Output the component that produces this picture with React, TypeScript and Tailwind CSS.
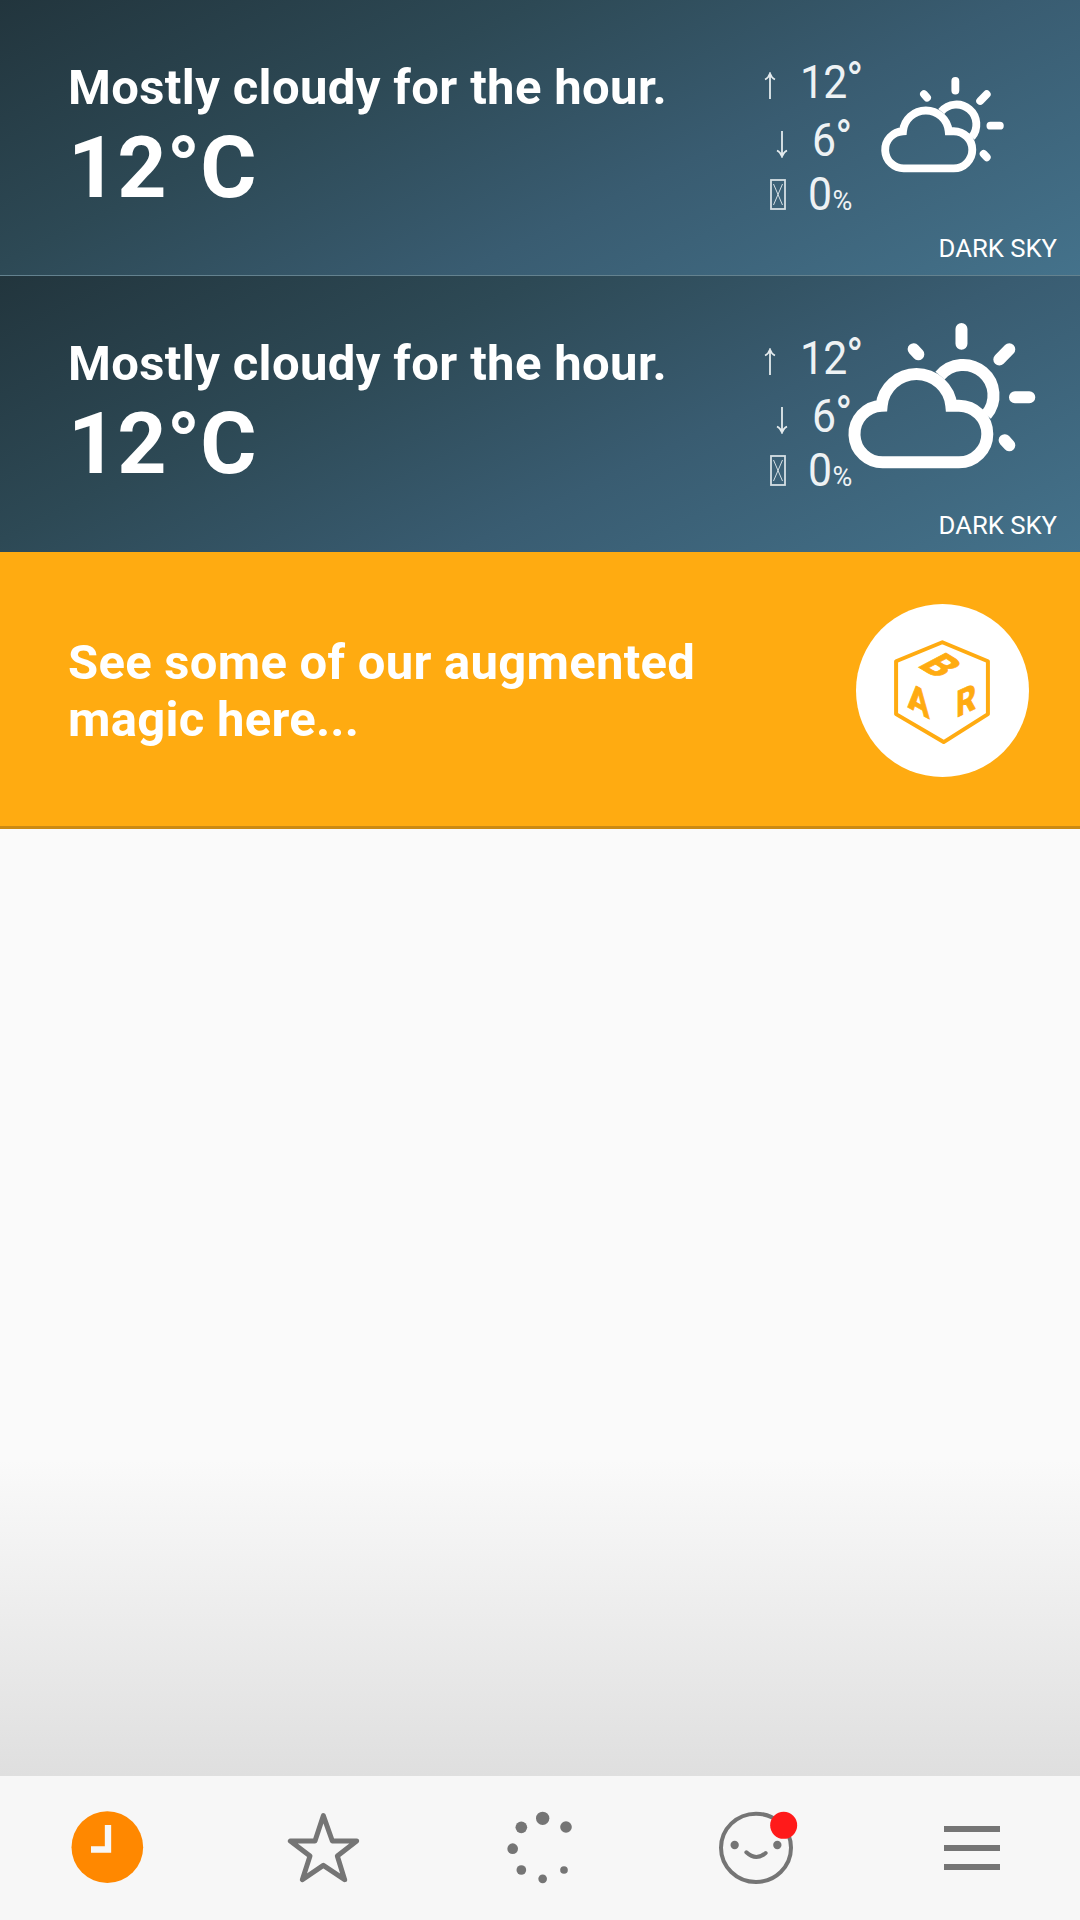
import type { ReactNode } from "react";

function CloudSun({ className }: { className: string }) {
  return (
    <svg viewBox="390 158 556 436" className={className} fill="none" stroke="#fff" strokeWidth="36">
      <path d="M492 576A84.500 84.500 0 0 1 485 406A105 105 0 0 1 694 406H717A85 85 0 0 1 717 576Z" />
      <path d="M660 316A91 91 0 0 1 799 434" />
      <path
        strokeLinecap="round"
        d="M724.5 176V220M885 380.5H928M838 267.5L868 237M581 236.5L595 252M854 509.500L868 525"
      />
    </svg>
  );
}

function Arrow({ down = false }: { down?: boolean }) {
  return (
    <svg
      viewBox="0 0 12 28"
      className={down ? "relative top-[5px] h-7 w-3 rotate-180" : "relative top-[5px] h-7 w-3"}
      fill="none"
      stroke="#e3eaed"
      strokeWidth="1.8"
    >
      <path d="M6 27V2M1 7.500Q4.500 6 6 1.500Q7.500 6 11 7.500" />
    </svg>
  );
}

function MissingGlyph() {
  return (
    <svg viewBox="0 0 16 31" className="mb-[6px] h-[31px] w-4" fill="none" stroke="#d5dfe4">
      <rect x="1" y="1" width="14" height="29" strokeWidth="1.8" />
      <path d="M3.500 5L12.500 26M12.500 5L3.500 26" strokeWidth="1" />
    </svg>
  );
}

function WeatherCard({ icon, className }: { icon: ReactNode; className: string }) {
  return (
    <section
      className={`relative flex h-[276px] bg-[linear-gradient(154deg,#22353d_0%,#2d4955_33%,#395c71_62%,#44728b_100%)] pl-[68px] text-white ${className}`}
    >
      <div className="flex w-[692px] flex-col pt-[59.500px]">
        <h2 className="text-[49px] leading-[56px] font-bold tracking-[0.37px] whitespace-nowrap">
          Mostly cloudy for the hour.
        </h2>
        <p className="mt-[2px] text-[86px] leading-[100px] font-bold">12°C</p>
      </div>
      <div className="flex w-[122px] shrink-0 flex-col pt-[52px] text-[47px] text-[#eef2f4]">
        <div className="flex h-[58px] items-center pl-[4px] leading-[58px]">
          <Arrow />
          <span className="ml-[24px] origin-left scale-x-[0.91] tracking-[-1px]">
            12<span className="text-[50px]">°</span>
          </span>
        </div>
        <div className="flex h-[58px] items-center pl-[16px] leading-[58px]">
          <Arrow down />
          <span className="ml-[24px] origin-left scale-x-[0.91] tracking-[-1px]">
            6<span className="text-[50px]">°</span>
          </span>
        </div>
        <div className="flex h-[59px] items-center pl-[10px] leading-[59px]">
          <MissingGlyph />
          <span className="ml-[22px] flex items-baseline">
            <span className="origin-left scale-x-[0.91]">0</span>
            <span className="-ml-[2px] text-[27px]">%</span>
          </span>
        </div>
      </div>
      <div className="flex h-[250px] w-[121px] shrink-0 items-center justify-center">{icon}</div>
      <span className="absolute right-[23px] bottom-[11.500px] text-[25.700px] leading-[32px]">DARK SKY</span>
    </section>
  );
}

function CubeBadge() {
  return (
    <div className="mt-[2px] flex size-[173px] items-center justify-center rounded-full bg-white">
      <svg viewBox="78 71 519 520" className="size-[173px]" fill="#ffab11">
        <path
          d="M337 186L474 243V402L341 486L198 402V243Z"
          fill="none"
          stroke="#ffab11"
          strokeWidth="12"
          strokeLinejoin="round"
        />
        <g fontFamily="Roboto" fontWeight="800" fontSize="100" stroke="#ffab11" strokeWidth="2">
          <text transform="matrix(.99 .6 -1.155 .6 260 257)">B</text>
          <text transform="matrix(.97 .53 0 1.1 233 381)">A</text>
          <text transform="matrix(.92 -.43 0 1.1 379 413)">R</text>
        </g>
      </svg>
    </div>
  );
}

const tabs = [
  {
    name: "Recent",
    icon: (
      <svg viewBox="78 138 252 252" className="size-[84px]">
        <circle cx="202" cy="261.500" r="107.500" fill="#ff8800" />
        <path d="M204 195V268.500H153" fill="none" stroke="#f7f7f7" strokeWidth="19" />
      </svg>
    ),
  },
  {
    name: "Favourites",
    icon: (
      <svg viewBox="726 138 252 252" className="size-[84px]">
        <path
          d="M850 167L877 243H950L892 288L914 359L850 316L787 359L810 288L751 243H825Z"
          fill="none"
          stroke="#757575"
          strokeWidth="15"
          strokeLinejoin="round"
        />
      </svg>
    ),
  },
  {
    name: "Activity",
    icon: (
      <svg viewBox="54 138 252 252" className="size-[84px]" fill="#757575">
        <circle cx="188" cy="175" r="20" />
        <circle cx="258" cy="201" r="17.500" />
        <circle cx="124" cy="202" r="17.500" />
        <circle cx="98" cy="266" r="16" />
        <circle cx="124" cy="330" r="14.500" />
        <circle cx="188" cy="356.500" r="13" />
        <circle cx="252" cy="330" r="11.500" />
      </svg>
    ),
  },
  {
    name: "Profile",
    icon: (
      <svg viewBox="702 138 252 252" className="size-[84px]" fill="#757575">
        <ellipse cx="828" cy="263.500" rx="105" ry="102.500" fill="none" stroke="#757575" strokeWidth="12" />
        <circle cx="764" cy="255" r="12.500" />
        <circle cx="892" cy="255" r="12.500" />
        <path d="M799 277Q828 304 857 279" fill="none" stroke="#757575" strokeWidth="12" strokeLinecap="round" />
        <circle cx="911" cy="196" r="40.500" fill="#ff1a1a" />
      </svg>
    ),
  },
  {
    name: "Menu",
    icon: (
      <div className="flex w-14 flex-col gap-[13px]">
        <span className="h-[6px] bg-[#757575]" />
        <span className="h-[6px] bg-[#757575]" />
        <span className="h-[6px] bg-[#757575]" />
      </div>
    ),
  },
];

export default function App() {
  return (
    <div className="flex h-[1920px] w-[1080px] flex-col overflow-hidden bg-[#fafafa] font-['Roboto',sans-serif]">
      <WeatherCard
        className="border-b border-[#64828f]"
        icon={<CloudSun className="h-[95.300px] w-[122px] shrink-0 overflow-visible" />}
      />
      <WeatherCard
        className=""
        icon={<CloudSun className="mb-[11px] h-[145.300px] w-[185.300px] shrink-0 overflow-visible" />}
      />
      <section className="flex h-[277px] items-center justify-between border-b-[3px] border-[#cc8a12] bg-[#ffab11] pr-[51px] pl-[68px] text-white">
        <h2 className="mt-[4px] w-[660px] text-[49px] leading-[57.500px] font-bold tracking-[0.27px]">
          See some of our augmented magic here...
        </h2>
        <CubeBadge />
      </section>
      <main className="flex flex-1 flex-col justify-end">
        <div className="h-[316px] bg-linear-to-b from-[#fafafa] to-[#dfdfdf]" />
      </main>
      <nav className="grid h-36 grid-cols-5 bg-[#f7f7f7]">
        {tabs.map((tab) => (
          <button key={tab.name} aria-label={tab.name} className="flex items-center justify-center">
            {tab.icon}
          </button>
        ))}
      </nav>
    </div>
  );
}
